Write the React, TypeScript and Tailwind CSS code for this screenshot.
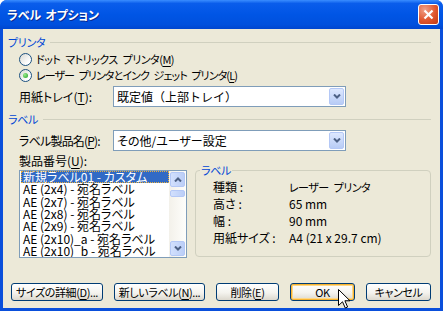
import type { ReactNode } from "react";

const font =
  "font-['Noto_Sans_CJK_JP','Noto_Sans',sans-serif] [font-feature-settings:'palt']";

function U({ children }: { children: ReactNode }) {
  return <span className="underline underline-offset-[2px]">{children}</span>;
}

function Chevron({ up }: { up?: boolean }) {
  return (
    <svg width="8" height="5" viewBox="0 0 8 5">
      <path
        d={up ? "M1 4.5 L4 1.5 L7 4.5" : "M1 0.5 L4 3.5 L7 0.5"}
        stroke="#4D6185"
        strokeWidth="2"
        fill="none"
      />
    </svg>
  );
}

function Radio({ checked }: { checked?: boolean }) {
  return (
    <span className="flex h-[13px] w-[13px] shrink-0 items-center justify-center rounded-full border border-[#1C5180] bg-[linear-gradient(135deg,#D8D8D2,#FFFFFF_75%)]">
      {checked ? (
        <span className="h-[5px] w-[5px] rounded-full bg-[radial-gradient(circle_at_35%_35%,#9BEA8F,#21A121)]" />
      ) : null}
    </span>
  );
}

function Combo({ children }: { children: ReactNode }) {
  return (
    <div className="flex h-[21px] w-[233px] items-center border border-[#7F9DB9] bg-white pl-[3px] pr-px">
      <span className="flex-1 whitespace-nowrap text-[12px] leading-none">{children}</span>
      <span className="flex h-[17px] w-[15px] items-center justify-center rounded-[2px] border border-[#B4C8F6] bg-[linear-gradient(#DDE8FE,#B8CCF6)]">
        <Chevron />
      </span>
    </div>
  );
}

function SectionHeader({ label }: { label: string }) {
  return (
    <div className="flex h-[14px] items-center gap-[5px]">
      <span className="text-[11px] leading-none tracking-[-0.3px] text-[#0046D5]">{label}</span>
      <span className="h-px flex-1 bg-[#D0D0BF]" />
    </div>
  );
}

function Btn({
  children,
  width,
  hot,
}: {
  children: ReactNode;
  width: string;
  hot?: boolean;
}) {
  return (
    <button
      type="button"
      className={`flex h-[18px] items-center justify-center whitespace-nowrap rounded-[3px] border border-[#003C74] bg-[linear-gradient(#FFFFFF,#F4F3EE_55%,#DCD8CE)] text-[11px] leading-none tracking-[-0.4px] text-black ${width} ${
        hot ? "shadow-[inset_0_0_0_1px_#F8B330,inset_0_0_0_2px_#FDD889]" : ""
      }`}
    >
      {children}
    </button>
  );
}

const items = [
  "新規ラベル01 - カスタム",
  "AE (2x4) - 宛名ラベル",
  "AE (2x7) - 宛名ラベル",
  "AE (2x8) - 宛名ラベル",
  "AE (2x9) - 宛名ラベル",
  "AE (2x10)_a - 宛名ラベル",
  "AE (2x10)_b - 宛名ラベル",
];

const details = [
  ["種類 :", "レーザー プリンタ"],
  ["高さ :", "65 mm"],
  ["幅 :", "90 mm"],
  ["用紙サイズ :", "A4 (21 x 29.7 cm)"],
];

export default function App() {
  return (
    <div
      className={`relative flex h-[311px] w-[443px] flex-col overflow-hidden rounded-t-[7px] bg-[#0A4FDB] ${font}`}
    >
      <div className="flex h-[29px] shrink-0 items-center justify-between bg-[linear-gradient(#3A8DFF,#0A5DEB_12%,#0055E5_50%,#0050DD_85%,#0046CF)] pl-[7px] pr-[4px]">
        <span className="text-[12px] font-bold leading-none tracking-[-0.2px] text-white [text-shadow:1px_1px_0_#0A2A90] [word-spacing:2px]">
          ラベル オプション
        </span>
        <span className="flex h-[21px] w-[21px] items-center justify-center rounded-[3px] border border-white bg-[radial-gradient(circle_at_30%_25%,#F0A088,#E0562E_55%,#C03A14)]">
          <svg width="11" height="11" viewBox="0 0 11 11">
            <path d="M1.5 1.5 L9.5 9.5 M9.5 1.5 L1.5 9.5" stroke="white" strokeWidth="2.2" />
          </svg>
        </span>
      </div>

      <div className="mx-[3px] mb-[3px] flex flex-1 flex-col bg-[#ECE9D8] pl-[5px] pr-[9px] pt-[6px] text-[12px] text-black">
        <SectionHeader label="プリンタ" />
        <div className="ml-[11px] mt-[2px] flex h-[16px] items-center gap-[4px]">
          <Radio />
          <span className="whitespace-nowrap text-[11px] leading-none tracking-[-0.5px] [word-spacing:3px]">
            ドット マトリックス プリンタ(<U>M</U>)
          </span>
        </div>
        <div className="ml-[11px] flex h-[16px] items-center gap-[4px]">
          <Radio checked />
          <span className="whitespace-nowrap text-[11px] leading-none tracking-[-0.9px] [word-spacing:3px]">
            レーザー プリンタとインク ジェット プリンタ(<U>L</U>)
          </span>
        </div>
        <div className="ml-[11px] mt-[3px] flex items-center">
          <span className="w-[94px] leading-none">
            用紙トレイ(<U>T</U>):
          </span>
          <Combo>
            <span className="[font-feature-settings:normal]">既定値（上部トレイ）</span>
          </Combo>
        </div>

        <div className="mt-[5px]">
          <SectionHeader label="ラベル" />
        </div>
        <div className="ml-[11px] mt-[4px] flex items-center">
          <span className="w-[94px] whitespace-nowrap leading-none tracking-[-0.8px]">
            ラベル製品名(<U>P</U>):
          </span>
          <Combo>その他/ユーザー設定</Combo>
        </div>

        <div className="ml-[11px] flex items-start">
          <div className="flex flex-col">
            <span className="mt-[3px] flex h-[14px] items-center leading-none">
              製品番号(<U>U</U>):
            </span>
            <div className="mt-[2px] flex h-[88px] w-[168px] border border-[#7F9DB9] bg-white">
              <div className="flex-1 overflow-hidden pl-px">
                {items.map((t, i) => (
                  <div
                    key={t}
                    className={`flex h-[12.3px] items-center whitespace-nowrap pl-[2px] text-[12px] leading-[12px] ${
                      i === 0
                        ? "bg-[#316AC5] text-white outline-1 -outline-offset-1 outline-dotted outline-[#E8B040]"
                        : ""
                    }`}
                  >
                    {t}
                  </div>
                ))}
              </div>
              <div className="flex w-[17px] flex-col bg-[linear-gradient(90deg,#F3F1EA,#FEFEFB)] px-px py-px">
                <span className="flex h-[15px] items-center justify-center rounded-[2px] border border-[#B4C8F6] bg-[linear-gradient(90deg,#D2E0FD,#BBCEF7)]">
                  <Chevron up />
                </span>
                <span className="mt-[3px] h-[7px] rounded-[2px] border border-[#B4C8F6] bg-[linear-gradient(90deg,#D2E0FD,#BBCEF7)]" />
                <span className="flex-1" />
                <span className="flex h-[15px] items-center justify-center rounded-[2px] border border-[#B4C8F6] bg-[linear-gradient(90deg,#D2E0FD,#BBCEF7)]">
                  <Chevron />
                </span>
              </div>
            </div>
          </div>

          <div className="relative ml-[8px] mt-[19px] h-[87px] w-[236px] rounded-[4px] border border-[#D0D0BF] pl-[17px] pt-[8px]">
            <span className="absolute left-[4px] top-[-7px] bg-[#ECE9D8] px-px text-[11px] leading-[12px] tracking-[-0.3px] text-[#0046D5]">
              ラベル
            </span>
            <div className="grid grid-cols-[76px_1fr]">
              {details.map(([k, v]) => (
                <div key={k} className="contents">
                  <span className="flex h-[16.8px] items-center whitespace-nowrap leading-none">{k}</span>
                  <span
                    className={`flex h-[16.8px] items-center whitespace-nowrap leading-none ${
                      k === "種類 :" ? "text-[11px] tracking-[-0.5px] [word-spacing:3px]" : ""
                    }`}
                  >
                    {v}
                  </span>
                </div>
              ))}
            </div>
          </div>
        </div>

        <div className="ml-[3px] mt-[25px] flex gap-[11px]">
          <Btn width="w-[92px]">
            サイズの詳細(<U>D</U>)...
          </Btn>
          <Btn width="w-[91px]">
            新しいラベル(<U>N</U>)...
          </Btn>
          <Btn width="w-[63px]">
            削除(<U>E</U>)
          </Btn>
          <Btn width="w-[65px]" hot>
            OK
          </Btn>
          <Btn width="w-[65px]">キャンセル</Btn>
        </div>
      </div>

      <svg
        className="absolute left-[338px] top-[289px]"
        width="13"
        height="20"
        viewBox="0 0 13 20"
      >
        <path
          d="M0.5 0.5 L0.5 16.5 L4.5 12.8 L7.3 19 L9.6 18 L6.9 11.8 L12 11.8 Z"
          fill="white"
          stroke="black"
          strokeWidth="1"
          strokeLinejoin="miter"
        />
      </svg>
    </div>
  );
}
